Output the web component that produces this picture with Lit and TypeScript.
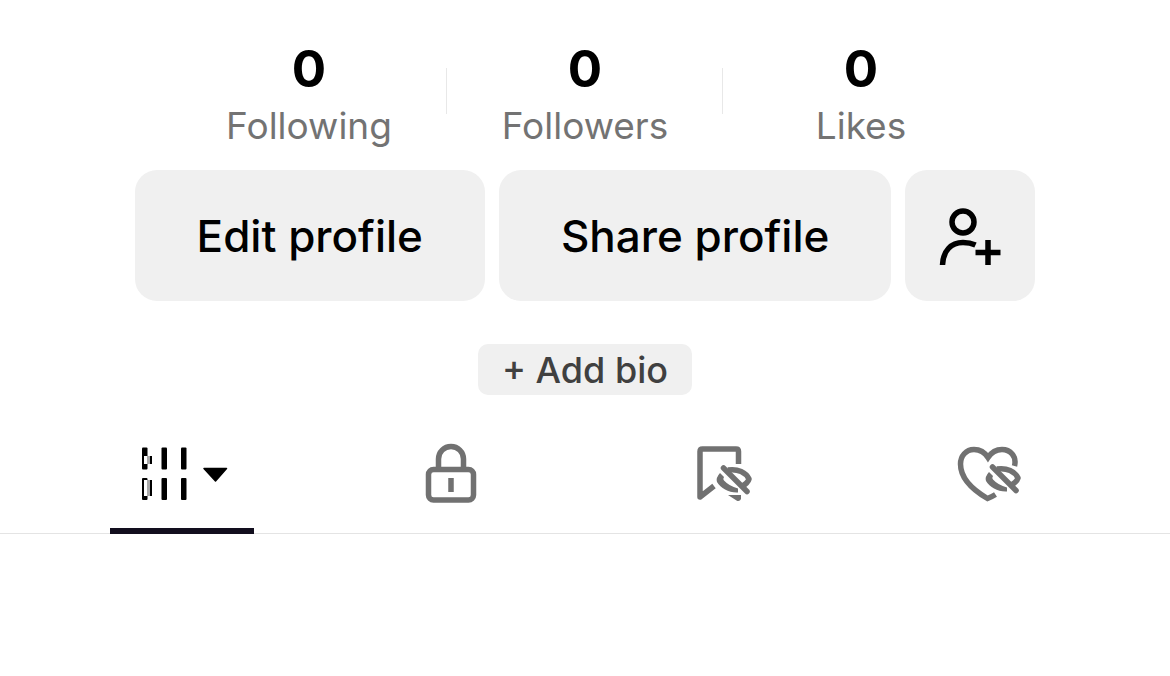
import { LitElement, html, css, svg } from "lit";
import { customElement, state } from "lit/decorators.js";

const hiddenEye = svg`
  <path d="M35.500 26L59 49.500" stroke-width="5.500" stroke-linecap="round" />
  <path d="M40 28C50 26.500 58 30.500 61 37Q60 41 53 45" stroke-linejoin="round" />
  <path class="solid" d="M32 31L36 35Q34.500 37 36 38.500Q41 44 50 46.500V50.500C41 51 33 46.500 29 40Q27.500 36 32 31Z" />
`;

const lockIcon = html`
  <svg class="icon" viewBox="0 0 64 64" aria-hidden="true">
    <rect x="9.5" y="27.5" width="45" height="30.5" rx="5" />
    <path d="M19.5 27V17a12.5 12.5 0 0 1 25 0v10" />
    <path d="M32 36v14" />
  </svg>`;

const bookmarkIcon = html`
  <svg class="icon" viewBox="0 0 64 64" aria-hidden="true">
    <path d="M50.500 22V9.500Q50.500 7 48 7H14.500Q12 7 12 9.500V55L26 44" stroke-linejoin="round" />
    <path class="solid" d="M40 53H53V57Q51.500 60 48.500 58.500Z" />
    <g>${hiddenEye}</g>
  </svg>`;

const heartIcon = html`
  <svg class="icon" viewBox="0 0 64 64" aria-hidden="true">
    <path d="M57.500 24C60 14 53 7.500 45 7.500C38 7.500 34 11 31 15.500C27.500 10 23 7.500 17 7.500C9 7.500 3.500 14 3.500 22C3.500 37 16 48 30.500 56.500Q34.500 55 38.500 52.500" />
    <g transform="translate(0 -1)">${hiddenEye}</g>
  </svg>`;

const addFriendIcon = html`
  <svg class="icon" viewBox="0 0 64 64" aria-hidden="true">
    <circle cx="25" cy="18" r="11" />
    <path d="M4.500 61C5 47 13 38.500 25 38.500Q32 38.500 37.500 41" />
    <path d="M37.500 48.500H62.500M50 36V61" />
  </svg>`;

const gridIcon = html`
  <svg class="grid-icon" viewBox="0 0 88 64" aria-hidden="true">
    <g>
      <rect x="4" y="5.500" width="5.500" height="22" rx="1" />
      <rect x="23.500" y="5.500" width="5.500" height="22" rx="1" />
      <rect x="43" y="5.500" width="5.500" height="22" rx="1" />
      <rect x="4" y="36" width="5.500" height="22" rx="1" />
      <rect x="23.500" y="36" width="5.500" height="22" rx="1" />
      <rect x="43" y="36" width="5.500" height="22" rx="1" />
      <path d="M66 26.500H88.500L77.500 39Z" stroke="#000" stroke-width="1.500" stroke-linejoin="round" />
    </g>
    <path class="paper" d="M6 14h3v8H6zM6 38h3v16H6z" />
    <path class="shade" d="M9 14h3v8H9zM9 38h3v16H9z" />
    <path d="M12 14h2v8h-2zM12 38h2v16h-2z" />
  </svg>`;

@customElement("app-root")
export class AppRoot extends LitElement {
  @state() private active = 0;

  private stats = ["Following", "Followers", "Likes"];
  private tabs = [
    { label: "Posts", icon: gridIcon },
    { label: "Private", icon: lockIcon },
    { label: "Saved", icon: bookmarkIcon },
    { label: "Liked", icon: heartIcon },
  ];

  static styles = css`
    :host {
      display: block;
      min-height: 100vh;
      background: #fff;
      color: #000;
      font-family: Inter, "Liberation Sans", sans-serif;
    }
    button {
      border: 0;
      margin: 0;
      padding: 0;
      background: none;
      color: inherit;
      font: inherit;
      cursor: pointer;
    }
    .profile {
      display: flex;
      flex-direction: column;
      align-items: center;
      padding-top: 40px;
    }
    .stats {
      display: flex;
      margin: 0;
    }
    .stat {
      display: flex;
      flex-direction: column-reverse;
      align-items: center;
      width: 276px;
      box-sizing: border-box;
      background: linear-gradient(#e8e8e8, #e8e8e8) right 28px / 1px 46px no-repeat;
    }
    .stat:last-child {
      background: none;
    }
    .count {
      margin: 0;
      font-size: 51px;
      font-weight: 700;
      line-height: 58px;
    }
    .label {
      color: #737373;
      font-size: 37px;
      line-height: 56px;
    }
    .actions {
      display: flex;
      gap: 14px;
      margin-top: 16px;
    }
    .action {
      display: flex;
      align-items: center;
      justify-content: center;
      height: 131px;
      padding: 0 62px;
      border-radius: 22px;
      background: #f0f0f0;
      font-size: 44px;
      font-weight: 500;
    }
    .square {
      width: 130px;
      padding: 0;
    }
    .bio {
      height: 51px;
      margin-top: 43px;
      padding: 0 24px;
      border-radius: 10px;
      background: #f0f0f0;
      color: #404040;
      font-size: 36px;
      font-weight: 500;
    }
    .tabs {
      display: grid;
      grid-template-columns: repeat(4, 1fr);
      margin-top: 33px;
      padding: 0 47px;
      box-shadow: inset 0 -1px #e4e4e4;
    }
    .tab {
      display: flex;
      justify-content: center;
      color: #717171;
    }
    .mark {
      display: flex;
      justify-content: center;
      width: 144px;
      padding: 14px 0 22px;
      border-bottom: 6px solid transparent;
    }
    .selected .mark {
      border-color: #120e1e;
    }
    .icon {
      width: 64px;
      height: 64px;
      overflow: visible;
      fill: none;
      stroke: currentColor;
      stroke-width: 5.5;
    }
    .solid {
      fill: currentColor;
      stroke: none;
    }
    .grid-icon {
      width: 88px;
      height: 64px;
      overflow: visible;
      fill: #000;
    }
    .paper {
      fill: #fff;
    }
    .shade {
      fill: #aaa;
    }
  `;

  render() {
    return html`
      <main>
        <section class="profile">
          <dl class="stats">
            ${this.stats.map(
              (name) => html`<div class="stat"><dt class="label">${name}</dt><dd class="count">0</dd></div>`
            )}
          </dl>
          <div class="actions">
            <button class="action">Edit profile</button>
            <button class="action">Share profile</button>
            <button class="action square" aria-label="Add friends">${addFriendIcon}</button>
          </div>
          <button class="bio">+ Add bio</button>
        </section>
        <nav class="tabs" role="tablist">
          ${this.tabs.map(
            (tab, i) => html`<button
              class="tab ${i === this.active ? "selected" : ""}"
              role="tab"
              aria-label=${tab.label}
              aria-selected=${i === this.active}
              @click=${() => (this.active = i)}
            ><span class="mark">${tab.icon}</span></button>`
          )}
        </nav>
      </main>
    `;
  }
}
